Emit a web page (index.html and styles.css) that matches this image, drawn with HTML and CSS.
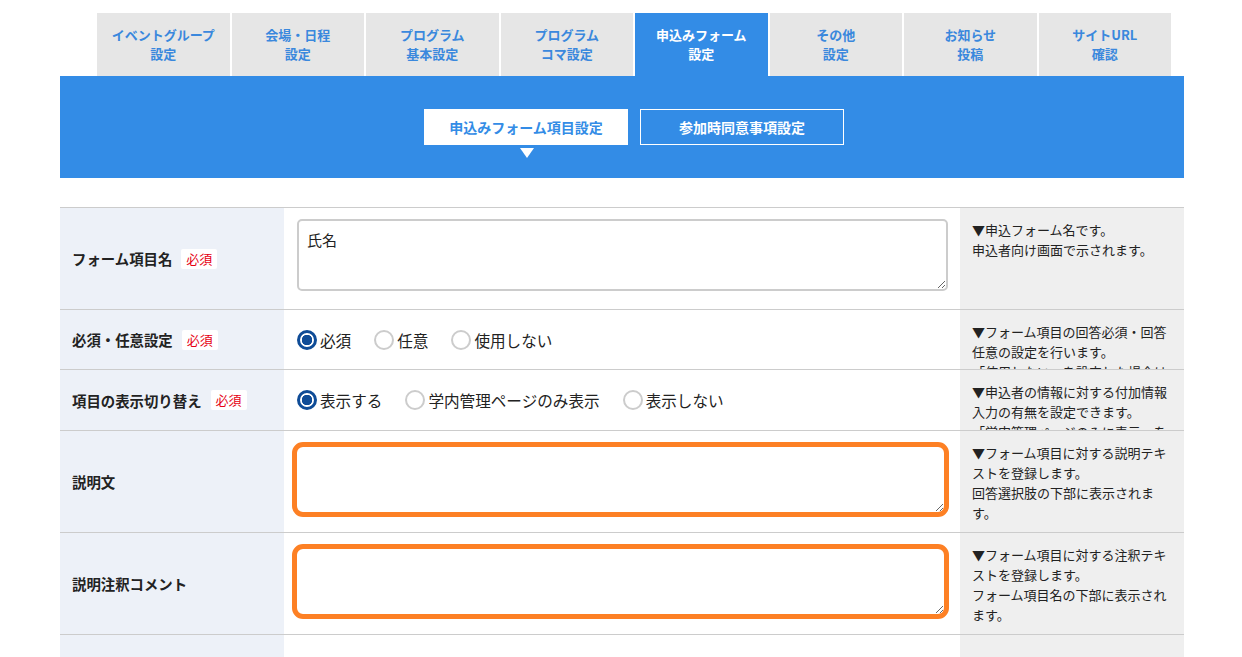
FILE: index.html
```html
<!DOCTYPE html>
<html lang="ja">
  <head>
    <meta charset="utf-8" />
    <title>申込みフォーム設定</title>
    <link rel="stylesheet" href="styles.css">
  </head>

  <body>
    <div class="page">
      <!-- main tabs -->
      <ul class="tabs">
        <li class="tab">イベントグループ<br />設定</li>
        <li class="tab">会場・日程<br />設定</li>
        <li class="tab">プログラム<br />基本設定</li>
        <li class="tab">プログラム<br />コマ設定</li>
        <li class="tab active">申込みフォーム<br />設定</li>
        <li class="tab">その他<br />設定</li>
        <li class="tab">お知らせ<br />投稿</li>
        <li class="tab">サイトURL<br />確認</li>
      </ul>

      <!-- sub tabs -->
      <div class="band">
        <div class="sub-tabs">
          <div class="sub-tab current">申込みフォーム項目設定</div>
          <div class="sub-tab">参加時同意事項設定</div>
        </div>
      </div>

      <!-- form table -->
      <div class="form-table">
        <div class="row tall">
          <div class="label">フォーム項目名<span class="badge">必須</span></div>
          <div class="field">
            <textarea class="input">氏名</textarea>
          </div>
          <div class="note">▼申込フォーム名です。<br />申込者向け画面で示されます。</div>
        </div>

        <div class="row short">
          <div class="label">必須・任意設定<span class="badge">必須</span></div>
          <div class="field radios">
            <span class="radio checked">必須</span>
            <span class="radio">任意</span>
            <span class="radio">使用しない</span>
          </div>
          <div class="note">▼フォーム項目の回答必須・回答任意の設定を行います。<br />「使用しない」を設定した場合は申込フォームに表示されません。</div>
        </div>

        <div class="row short2">
          <div class="label">項目の表示切り替え<span class="badge">必須</span></div>
          <div class="field radios">
            <span class="radio checked">表示する</span>
            <span class="radio">学内管理ページのみ表示</span>
            <span class="radio">表示しない</span>
          </div>
          <div class="note">▼申込者の情報に対する付加情報入力の有無を設定できます。<br />「学内管理ページのみに表示」を選ぶと申込者には表示されません。</div>
        </div>

        <div class="row tall">
          <div class="label">説明文</div>
          <div class="field">
            <textarea class="input marked"></textarea>
          </div>
          <div class="note">▼フォーム項目に対する説明テキストを登録します。<br />回答選択肢の下部に表示されます。</div>
        </div>

        <div class="row tall">
          <div class="label">説明注釈コメント</div>
          <div class="field">
            <textarea class="input marked"></textarea>
          </div>
          <div class="note">▼フォーム項目に対する注釈テキストを登録します。<br />フォーム項目名の下部に表示されます。</div>
        </div>

        <div class="row tall">
          <div class="label"></div>
          <div class="field"></div>
          <div class="note"></div>
        </div>
      </div>
    </div>
  </body>
</html>
```

FILE: styles.css
```css
body {
  margin: 0;
  font-family: "Noto Sans CJK JP", "Noto Sans", sans-serif;
  color: #222;
  background: #fff;
}
.page {
  width: 1124px;
  margin-left: 60px;
  padding-top: 13px;
}
/* main tabs */
.tabs {
  display: flex;
  gap: 2px;
  margin: 0 0 0 37px;
  padding: 0;
  list-style: none;
  width: 1074px;
}
.tab {
  flex: 1;
  height: 63px;
  padding-bottom: 2px;
  box-sizing: border-box;
  display: flex;
  align-items: center;
  justify-content: center;
  text-align: center;
  background-color: #e6e6e6;
  color: #3a88dd;
  font-size: 13px;
  font-weight: bold;
  line-height: 19px;
}
.tab.active {
  background-color: #338ce6;
  color: #fff;
}
/* sub tabs */
.band {
  height: 102px;
  background-color: #338ce6;
  padding-top: 33px;
  box-sizing: border-box;
}
.sub-tabs {
  display: flex;
  justify-content: center;
  gap: 12px;
  padding-left: 24px;
}
.sub-tab {
  position: relative;
  width: 204px;
  height: 36px;
  box-sizing: border-box;
  border: 1px solid #fff;
  display: flex;
  align-items: center;
  justify-content: center;
  color: #fff;
  font-size: 14px;
  font-weight: bold;
}
.sub-tab.current {
  background-color: #fff;
  color: #338ce6;
}
.sub-tab.current::after {
  content: "";
  position: absolute;
  left: 95px;
  top: 38px;
  border-left: 7px solid transparent;
  border-right: 7px solid transparent;
  border-top: 10px solid #fff;
}
/* form table */
.form-table {
  margin-top: 29px;
  border-top: 1px solid #cccccc;
}
.row {
  display: grid;
  grid-template-columns: 224px 676px 224px;
  border-bottom: 1px solid #cccccc;
  box-sizing: border-box;
  height: 102px;
  overflow: hidden;
}
.row.short {
  height: 60px;
}
.row.short2 {
  height: 61px;
}
.label {
  background-color: #edf1f8;
  display: flex;
  align-items: center;
  padding-left: 12px;
  font-size: 14.4px;
  font-weight: bold;
}
.badge {
  margin-left: 9px;
  padding: 0 5px;
  height: 20px;
  line-height: 20px;
  background-color: #fff;
  border-radius: 2px;
  color: #e60012;
  font-size: 13px;
  font-weight: normal;
}
.field {
  padding: 11px 12px 0 13px;
}
.radios {
  display: flex;
  align-items: center;
  gap: 23px;
  padding-top: 0;
  font-size: 15.6px;
}
.radio {
  display: flex;
  align-items: center;
  gap: 3px;
}
.radio::before {
  content: "";
  width: 20px;
  height: 20px;
  box-sizing: border-box;
  border: 2px solid #cccccc;
  border-radius: 50%;
  background: #fff;
}
.radio.checked::before {
  border: 3px solid #0f4c97;
  background: radial-gradient(circle, #0f4c97 0 5px, #fff 5.5px);
}
.input {
  display: block;
  width: 651px;
  height: 72px;
  box-sizing: border-box;
  border: 2px solid #cccccc;
  border-radius: 5px;
  padding: 8px;
  font-family: inherit;
  font-size: 15px;
  color: #222;
  resize: both;
}
.input.marked {
  width: 657px;
  height: 75px;
  margin: 0 0 0 -5px;
  border: 5px solid #fd8024;
  border-radius: 11px;
}
.note {
  background-color: #efefef;
  padding: 12px 10px 0 12px;
  font-size: 13px;
  line-height: 20px;
  overflow: hidden;
}
```
